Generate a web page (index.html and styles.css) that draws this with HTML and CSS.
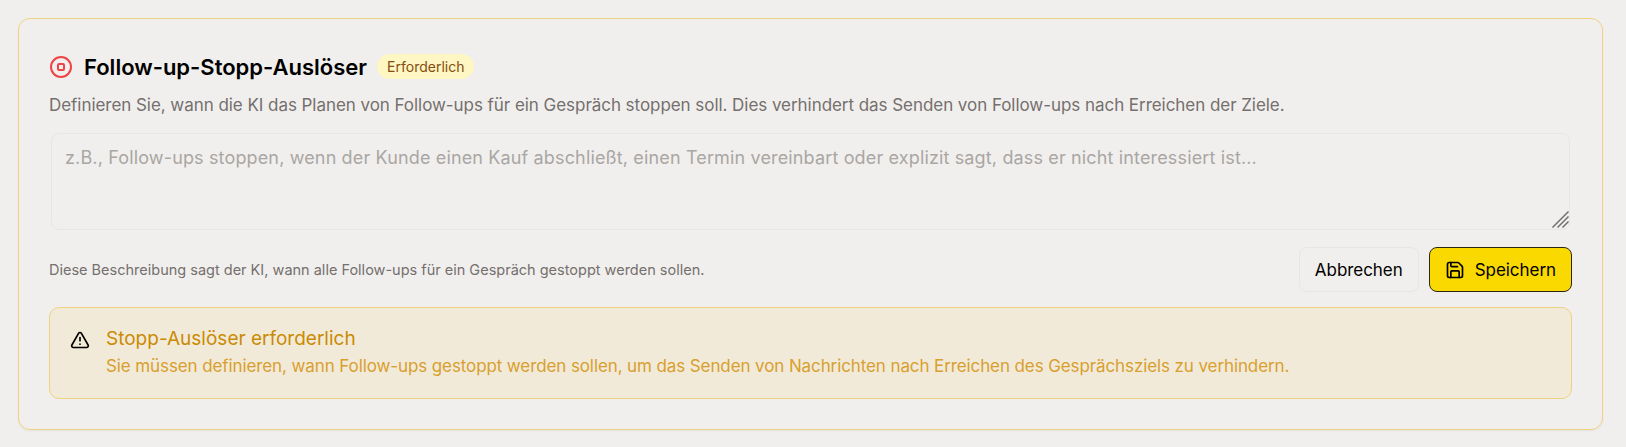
FILE: index.html
```html
<!DOCTYPE html>
<html lang="de">
<head>
    <meta charset="UTF-8">
    <meta name="viewport" content="width=device-width, initial-scale=1.0">
    <title>Follow-up-Stopp-Auslöser</title>
    <link rel="stylesheet" href="styles.css">
</head>
<body>
    <section class="card">
        <div class="card-header">
            <svg class="stop-icon" viewBox="0 0 24 24" fill="none" stroke="currentColor" stroke-width="2" stroke-linecap="round" stroke-linejoin="round">
                <circle cx="12" cy="12" r="10"></circle>
                <rect x="9" y="9" width="6" height="6" rx="1"></rect>
            </svg>
            <h2 class="card-title">Follow-up-Stopp-Auslöser</h2>
            <span class="badge">Erforderlich</span>
        </div>
        <p class="card-desc">Definieren Sie, wann die KI das Planen von Follow-ups für ein Gespräch stoppen soll. Dies verhindert das Senden von Follow-ups nach Erreichen der Ziele.</p>

        <div class="input-wrap">
            <textarea class="trigger-input" placeholder="z.B., Follow-ups stoppen, wenn der Kunde einen Kauf abschließt, einen Termin vereinbart oder explizit sagt, dass er nicht interessiert ist..."></textarea>
            <svg class="resize-grip" viewBox="0 0 17 17" fill="none" stroke="#6f6d6b" stroke-width="1.4">
                <path d="M0.5 16.5 16.5 0.5"></path>
                <path d="M5.5 16.5 16.5 5.5"></path>
                <path d="M10.5 16.5 16.5 10.5"></path>
            </svg>
        </div>

        <div class="form-row">
            <p class="hint">Diese Beschreibung sagt der KI, wann alle Follow-ups für ein Gespräch gestoppt werden sollen.</p>
            <div class="actions">
                <button class="btn btn-cancel" type="button">Abbrechen</button>
                <button class="btn btn-save" type="button">
                    <svg class="save-icon" viewBox="0 0 24 24" fill="none" stroke="currentColor" stroke-width="2" stroke-linecap="round" stroke-linejoin="round">
                        <path d="M15.2 3a2 2 0 0 1 1.4.6l3.8 3.8a2 2 0 0 1 .6 1.4V19a2 2 0 0 1-2 2H5a2 2 0 0 1-2-2V5a2 2 0 0 1 2-2z"></path>
                        <path d="M17 21v-7a1 1 0 0 0-1-1H8a1 1 0 0 0-1 1v7"></path>
                        <path d="M7 3v4a1 1 0 0 0 1 1h7"></path>
                    </svg>
                    Speichern
                </button>
            </div>
        </div>

        <div class="alert">
            <svg class="alert-icon" viewBox="0 0 24 24" fill="none" stroke="currentColor" stroke-width="2" stroke-linecap="round" stroke-linejoin="round">
                <path d="m21.73 18-8-14a2 2 0 0 0-3.48 0l-8 14A2 2 0 0 0 4 21h16a2 2 0 0 0 1.73-3"></path>
                <path d="M12 9v4"></path>
                <path d="M12 17h.01"></path>
            </svg>
            <div class="alert-body">
                <h3 class="alert-title">Stopp-Auslöser erforderlich</h3>
                <p class="alert-text">Sie müssen definieren, wann Follow-ups gestoppt werden sollen, um das Senden von Nachrichten nach Erreichen des Gesprächsziels zu verhindern.</p>
            </div>
        </div>
    </section>
</body>
</html>
```

FILE: styles.css
```css
* {
    box-sizing: border-box;
}

body {
    margin: 0;
    padding: 18px 23px 17px 18px;
    background-color: #f1efed;
    font-family: Inter, "Noto Sans", sans-serif;
    color: #000;
}

.card {
    padding: 30px;
    border: 1px solid #efd27f;
    border-radius: 12px;
    box-shadow: 0 1px 2px rgba(0, 0, 0, 0.05);
}

.card-header {
    display: flex;
    align-items: center;
    height: 36px;
}

.stop-icon {
    width: 24px;
    height: 24px;
    margin-right: 11px;
    color: #ef4444;
}

.card-title {
    margin: 0;
    font-size: 22px;
    line-height: 28px;
    font-weight: 600;
}

.badge {
    margin: 0 0 2px 10px;
    padding: 0 10px;
    height: 25px;
    line-height: 25px;
    border-radius: 13px;
    background-color: #fef6c3;
    color: #854d0e;
    font-size: 14px;
}

.card-desc {
    margin: 8px 0 0;
    font-size: 17px;
    line-height: 24px;
    letter-spacing: -0.05px;
    color: #74706d;
}

.input-wrap {
    position: relative;
    margin: 16px 2px 0;
}

.trigger-input {
    display: block;
    width: 100%;
    height: 97px;
    padding: 10px 13px;
    border: 1px solid #e8e6e4;
    border-radius: 8px;
    background: transparent;
    font-family: inherit;
    font-size: 18px;
    line-height: 28px;
    letter-spacing: 0.145px;
    color: #000;
    outline: none;
    resize: none;
}

.trigger-input::placeholder {
    color: #a9a6a3;
}

.resize-grip {
    position: absolute;
    right: 1px;
    bottom: 2px;
    width: 17px;
    height: 17px;
    pointer-events: none;
}

.form-row {
    display: flex;
    align-items: center;
    justify-content: space-between;
    margin-top: 17px;
}

.hint {
    margin: 0;
    font-size: 14.5px;
    line-height: 20px;
    color: #74706d;
}

.actions {
    display: flex;
    gap: 10px;
}

.btn {
    display: flex;
    align-items: center;
    height: 45px;
    padding: 0 15px;
    border-radius: 8px;
    font-family: inherit;
    font-size: 17px;
    letter-spacing: -0.05px;
    color: #000;
}

.btn-cancel {
    border: 1px solid #e8e6e4;
    background: transparent;
}

.btn-save {
    gap: 10px;
    padding: 0 15px;
    border: 1px solid #2b2610;
    background-color: #fad900;
}

.save-icon {
    width: 20px;
    height: 20px;
}

.alert {
    display: flex;
    gap: 16px;
    margin-top: 15px;
    padding: 19px 20px 20px;
    border: 1px solid #efd27f;
    border-radius: 10px;
    background-color: #f2ead8;
}

.alert-icon {
    flex: none;
    width: 20px;
    height: 20px;
    margin-top: 3px;
}

.alert-title {
    margin: 0 0 3px;
    font-size: 19px;
    line-height: 24px;
    font-weight: 400;
    color: #ca8a04;
}

.alert-text {
    margin: 0;
    font-size: 17px;
    line-height: 24px;
    letter-spacing: -0.105px;
    color: #d89f2e;
}
```
